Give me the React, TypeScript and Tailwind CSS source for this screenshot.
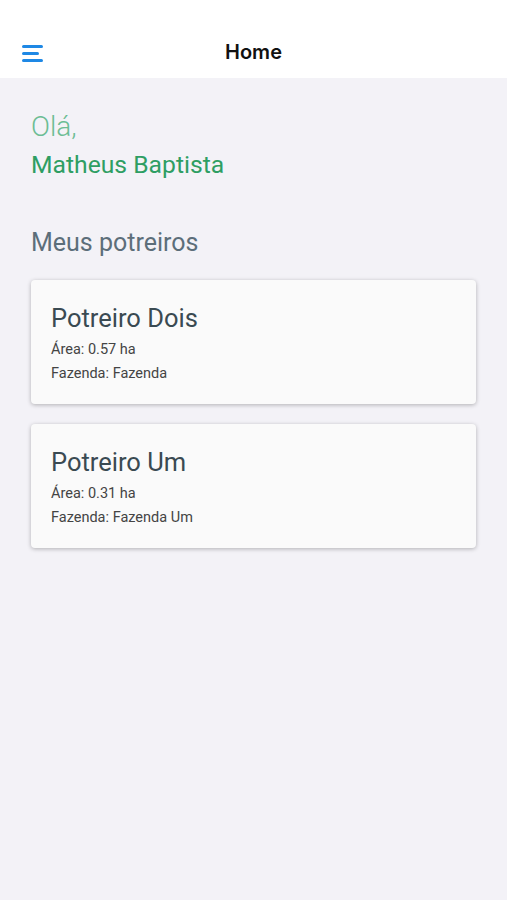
import React from 'react';

const potreiros = [
  { nome: 'Potreiro Dois', area: '0.57', fazenda: 'Fazenda' },
  { nome: 'Potreiro Um', area: '0.31', fazenda: 'Fazenda Um' },
];

export default function App() {
  return (
    <div className="min-h-[900px] w-[507px] bg-[#f3f2f7] font-['Roboto',sans-serif]">
      {/* Header */}
      <div className="relative flex h-[78px] items-end justify-center bg-white pb-[11px]">
        <button className="absolute left-[22px] top-[45px] flex flex-col gap-[4px]">
          <span className="block h-[3px] w-[21px] rounded-full bg-[#1e88e5]"></span>
          <span className="block h-[3px] w-[17px] rounded-full bg-[#1e88e5]"></span>
          <span className="block h-[3px] w-[21px] rounded-full bg-[#1e88e5]"></span>
        </button>
        <h1 className="font-['Inter',sans-serif] text-[20px] font-semibold text-[#111]">Home</h1>
      </div>

      {/* Greeting */}
      <div className="px-[31px] pt-[32px]">
        <p className="text-[28px] font-light leading-[34px] text-[#6cbd94]">Olá,</p>
        <p className="mt-[6px] text-[24.7px] leading-[30px] text-[#2e9e63]">Matheus Baptista</p>
        <h2 className="mt-[48px] text-[25px] leading-[30px] text-[#5c6e7a]">Meus potreiros</h2>
      </div>

      {/* Cards */}
      <div className="flex flex-col gap-[20px] px-[31px] pt-[22px]">
        {potreiros.map((p) => (
          <div
            key={p.nome}
            className="h-[124px] rounded-[4px] bg-[#fafafa] px-[20px] pt-[22px] shadow-[0_1px_4px_rgba(0,0,0,0.28)]"
          >
            <h3 className="text-[25.5px] leading-[32px] text-[#3a4a52]">{p.nome}</h3>
            <p className="mt-[4px] text-[14.5px] leading-[24px] text-[#444]">Área: {p.area} ha</p>
            <p className="text-[14.5px] leading-[24px] text-[#444]">Fazenda: {p.fazenda}</p>
          </div>
        ))}
      </div>
    </div>
  );
}
